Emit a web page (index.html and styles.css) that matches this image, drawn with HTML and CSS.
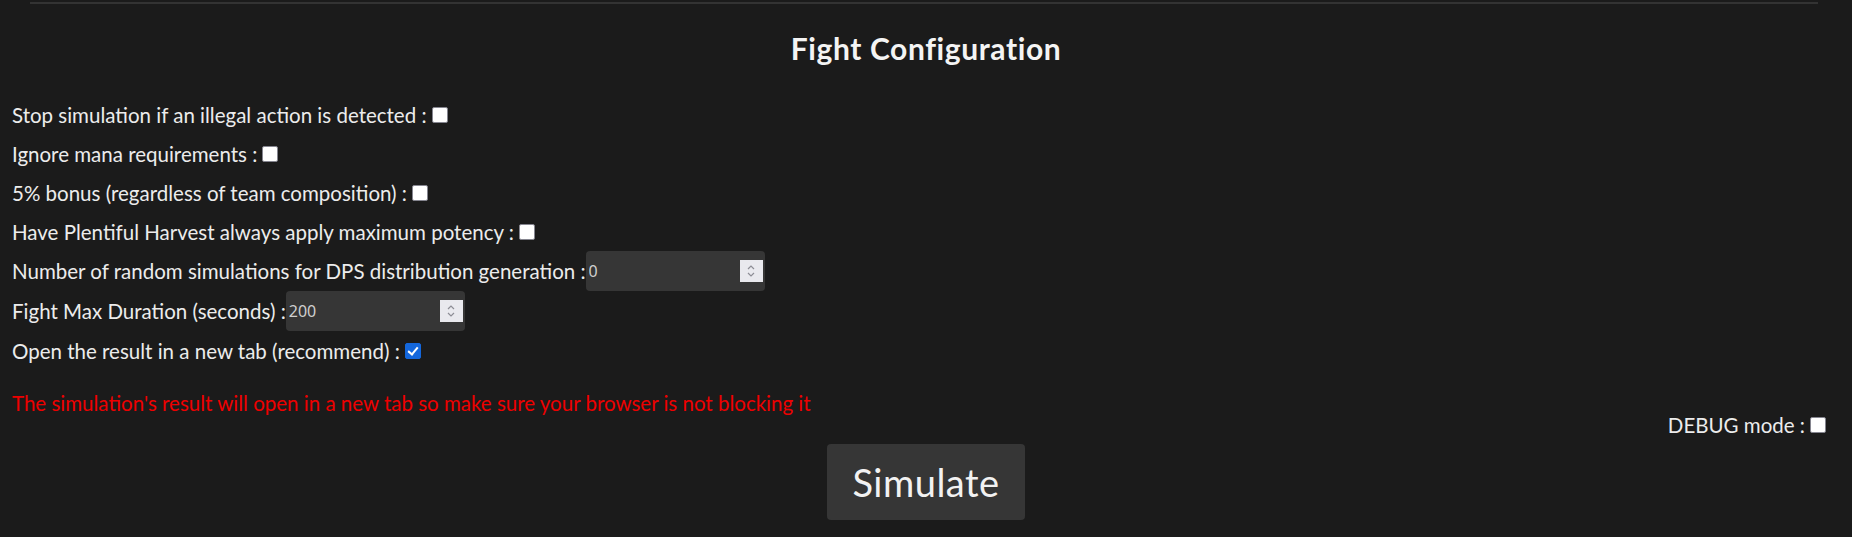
FILE: index.html
```html
<!DOCTYPE html>
<html lang="en">
<head>
<meta charset="utf-8">
<title>Fight Configuration</title>
<link rel="stylesheet" href="styles.css">
</head>
<body>
<hr class="divider">
<h2 class="title">Fight Configuration</h2>
<div class="options">
  <div class="row"><label>Stop simulation if an illegal action is detected :</label><input type="checkbox" class="check"></div>
  <div class="row"><label>Ignore mana requirements :</label><input type="checkbox" class="check"></div>
  <div class="row"><label>5% bonus (regardless of team composition) :</label><input type="checkbox" class="check"></div>
  <div class="row"><label>Have Plentiful Harvest always apply maximum potency :</label><input type="checkbox" class="check"></div>
  <div class="row row-input"><label>Number of random simulations for DPS distribution generation :</label><span class="num"><input type="number" value="0"><span class="spin"><svg width="10" height="16" viewBox="0 0 10 16"><path d="M2 6 L5 3 L8 6 M2 10 L5 13 L8 10" fill="none" stroke="#8d8d95" stroke-width="1.2"/></svg></span></span></div>
  <div class="row row-input"><label>Fight Max Duration (seconds) :</label><span class="num"><input type="number" value="200"><span class="spin"><svg width="10" height="16" viewBox="0 0 10 16"><path d="M2 6 L5 3 L8 6 M2 10 L5 13 L8 10" fill="none" stroke="#8d8d95" stroke-width="1.2"/></svg></span></span></div>
  <div class="row"><label>Open the result in a new tab (recommend) :</label><input type="checkbox" class="check" checked></div>
</div>
<p class="warning">The simulation's result will open in a new tab so make sure your browser is not blocking it</p>
<div class="debug"><label>DEBUG mode :</label><input type="checkbox" class="check"></div>
<div class="actions"><button class="simulate">Simulate</button></div>
</body>
</html>
```

FILE: styles.css
```css
html, body {
  margin: 0;
  padding: 0;
  background: #1b1b1b;
}
body {
  color: #ececec;
  font-family: Lato, "Open Sans", sans-serif;
  font-size: 20.5px;
}
.divider {
  margin: 2px 34px 0 30px;
  border: 0;
  border-top: 2px solid #333333;
  height: 0;
}
.title {
  margin: 24px 0 0;
  height: 40px;
  line-height: 40px;
  text-align: center;
  font-size: 30px;
  font-weight: 700;
  letter-spacing: 0.6px;
  color: #f4f4f4;
}
.options {
  margin-top: 27px;
  padding-left: 12px;
  display: flex;
  flex-direction: column;
}
.row {
  display: flex;
  align-items: center;
  height: 39px;
}
.row-input {
  height: 40px;
}
.row label {
  white-space: pre;
}
.check {
  appearance: none;
  -webkit-appearance: none;
  width: 16px;
  height: 16px;
  margin: 0 0 0 5px;
  background: #ffffff;
  border: 1.5px solid #85858f;
  border-radius: 2px;
  box-sizing: border-box;
  position: relative;
}
.check:checked {
  background: #1467dc;
  border-color: #1467dc;
}
.check:checked::after {
  content: "";
  position: absolute;
  left: 4px;
  top: 1px;
  width: 4px;
  height: 8px;
  border: solid #ffffff;
  border-width: 0 2px 2px 0;
  transform: rotate(40deg);
}
.num {
  position: relative;
  display: inline-block;
  margin-left: 0;
}
.num input {
  width: 179px;
  height: 40px;
  box-sizing: border-box;
  background: #363636;
  border: 0;
  border-radius: 4px;
  color: #cfcfcf;
  font-family: "Noto Sans", sans-serif;
  font-size: 16px;
  padding: 0 3px;
  -moz-appearance: textfield;
}
.num input::-webkit-inner-spin-button,
.num input::-webkit-outer-spin-button {
  -webkit-appearance: none;
  margin: 0;
}
.spin {
  position: absolute;
  right: 2px;
  top: 9px;
  width: 23px;
  height: 22px;
  background: #e9e9ee;
  display: flex;
  align-items: center;
  justify-content: center;
}
.warning {
  margin: 20px 0 0;
  padding-left: 12px;
  color: #ee0000;
  line-height: 27px;
}
.debug {
  display: flex;
  justify-content: flex-end;
  align-items: center;
  padding-right: 26px;
  height: 27px;
  margin-top: -6px;
}
.actions {
  display: flex;
  justify-content: center;
  margin-top: 6px;
}
.simulate {
  width: 198px;
  height: 76px;
  background: #363636;
  color: #f2f2f2;
  border: 0;
  border-radius: 4px;
  font-family: Lato, sans-serif;
  font-size: 38px;
  letter-spacing: 0.5px;
}
```
